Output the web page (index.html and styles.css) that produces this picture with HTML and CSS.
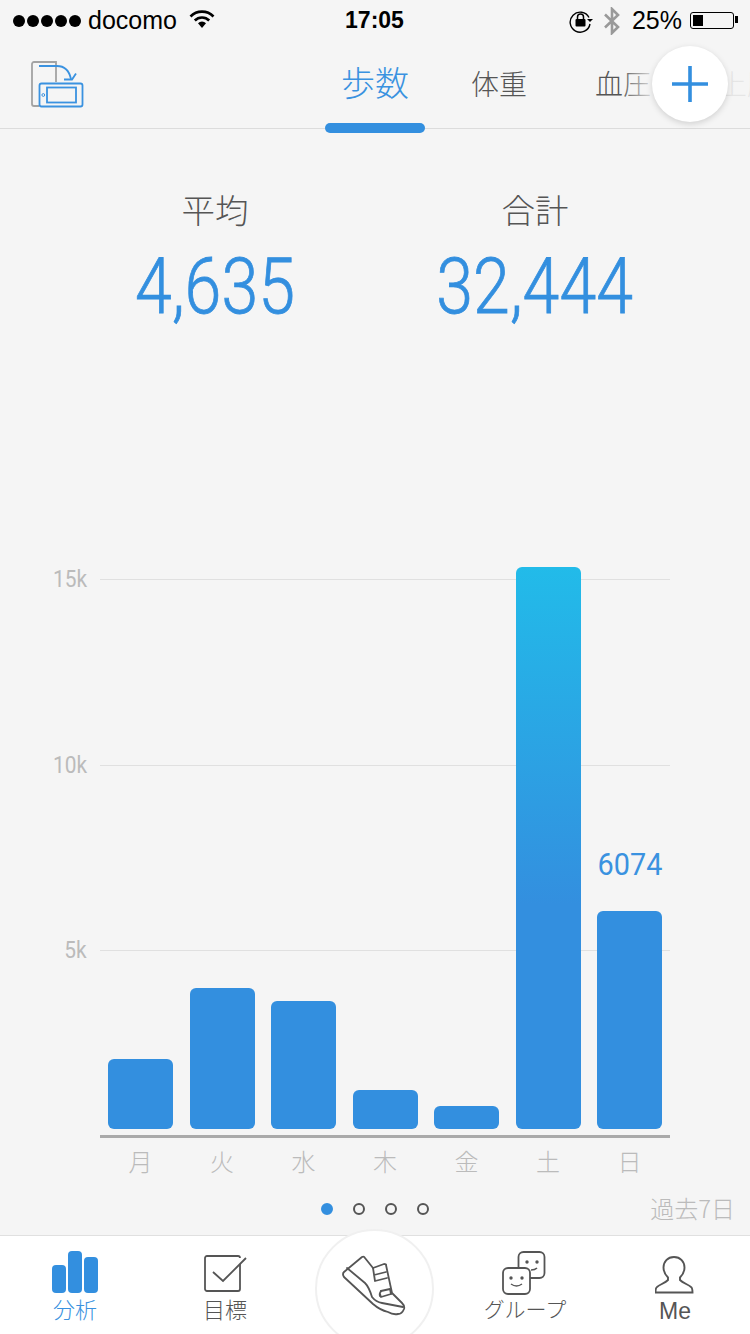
FILE: index.html
```html
<!DOCTYPE html>
<html lang="ja">
<head>
    <meta charset="UTF-8">
    <title>歩数</title>
    <link rel="stylesheet" href="styles.css">
</head>
<body>

    <div class="statusbar">
        <div class="status-left">
            <span class="signal"><i></i><i></i><i></i><i></i><i></i></span>
            <span class="carrier">docomo</span>
            <svg class="wifi" width="26" height="20" viewBox="0 0 26 20">
                <path d="M1.5 7.5a16 16 0 0 1 23 0" fill="none" stroke="#000" stroke-width="2.6"/>
                <path d="M5.8 11.5a10 10 0 0 1 14.4 0" fill="none" stroke="#000" stroke-width="2.6"/>
                <path d="M9 14.2a5.6 5.6 0 0 1 8 0L13 19z" fill="#000"/>
            </svg>
        </div>
        <div class="status-time">17:05</div>
        <div class="status-right">
            <svg width="24" height="24" viewBox="0 0 24 24">
                <path d="M20 8.5A10 10 0 1 0 21 15" fill="none" stroke="#000" stroke-width="1.4"/>
                <path d="M18 10h6l-3 3z" fill="#000"/>
                <rect x="6.5" y="10" width="10" height="7.5" rx="1" fill="#000"/>
                <path d="M8.5 10V8a3 3 0 0 1 6 0v2" fill="none" stroke="#000" stroke-width="1.5"/>
            </svg>
            <svg class="bt" width="18" height="28" viewBox="0 0 18 28">
                <path d="M2 7.5l13 12.5-6 6V2l6 6L2 20.500" fill="none" stroke="#999" stroke-width="2.6"/>
            </svg>
            <span class="battery-text">25%</span>
            <span class="battery"><span class="battery-level"></span></span>
        </div>
    </div>

    <div class="header">
        <svg class="switch-icon" width="54" height="50" viewBox="0 0 54 50">
            <path d="M26 2.500V1H4a2 2 0 0 0-2 2v40a2 2 0 0 0 2 2h5" transform="translate(0 1)" fill="none" stroke="#a3a3a3" stroke-width="1.800"/>
            <path d="M26 3v19" fill="none" stroke="#a3a3a3" stroke-width="1.800"/>
            <rect x="9.500" y="23.500" width="43" height="23" rx="2" fill="#f5f5f5" stroke="#3a92e0" stroke-width="1.800"/>
            <rect x="17" y="27.500" width="29" height="15" fill="none" stroke="#3a92e0" stroke-width="1.800"/>
            <circle cx="13.300" cy="35" r="1.400" fill="none" stroke="#3a92e0"/>
            <path d="M9 6h18c7 0 12 4 14 13" fill="none" stroke="#3a92e0" stroke-width="1.800"/>
            <path d="M34 19.500h8l4-6" fill="none" stroke="#3a92e0" stroke-width="1.800"/>
        </svg>
        <div class="tabs">
            <div class="tab tab-active">歩数</div>
            <div class="tab">体重</div>
            <div class="tab">血圧</div>
            <div class="tab">上腕</div>
        </div>
        <div class="tabs-fade"></div>
        <div class="add-button">
            <svg width="38" height="38" viewBox="0 0 38 38">
                <path d="M19 1v36M1 19h36" stroke="#338fdf" stroke-width="3.600"/>
            </svg>
        </div>
    </div>

    <div class="stats">
        <div class="stat">
            <div class="stat-label">平均</div>
            <div class="stat-value"><span>4,635</span></div>
        </div>
        <div class="stat">
            <div class="stat-label">合計</div>
            <div class="stat-value"><span>32,444</span></div>
        </div>
    </div>

    <div class="chart">
        <div class="plot">
            <div class="gridlines">
                <div class="gridline"><span>15k</span></div>
                <div class="gridline"><span>10k</span></div>
                <div class="gridline"><span>5k</span></div>
            </div>
            <div class="bars">
                <div class="bar" style="height:70px"></div>
                <div class="bar" style="height:141px"></div>
                <div class="bar" style="height:128px"></div>
                <div class="bar" style="height:39px"></div>
                <div class="bar" style="height:23px"></div>
                <div class="bar bar-max" style="height:562px"></div>
                <div class="bar" style="height:218px"><div class="bar-value"><span>6074</span></div></div>
            </div>
        </div>
        <div class="days">
            <span>月</span><span>火</span><span>水</span><span>木</span><span>金</span><span>土</span><span>日</span>
        </div>
    </div>

    <div class="pager">
        <div class="dots">
            <i class="dot dot-on"></i><i class="dot"></i><i class="dot"></i><i class="dot"></i>
        </div>
        <div class="range">過去7日</div>
    </div>

    <div class="tabbar">
        <div class="tabbar-item item-active">
            <svg width="46" height="44" viewBox="0 0 46 44">
                <rect x="0" y="14" width="14" height="28" rx="4" fill="#338fdf"/>
                <rect x="16" y="0" width="14" height="42" rx="4" fill="#338fdf"/>
                <rect x="32" y="6" width="14" height="36" rx="4" fill="#338fdf"/>
            </svg>
            <span>分析</span>
        </div>
        <div class="tabbar-item">
            <svg width="44" height="44" viewBox="0 0 44 44">
                <path d="M37 13v25a2 2 0 0 1-2 2H4a2 2 0 0 1-2-2V7a2 2 0 0 1 2-2h31a2 2 0 0 1 2 2" fill="none" stroke="#555" stroke-width="1.800"/>
                <path d="M10 21l10 9L43 7" fill="none" stroke="#555" stroke-width="1.800"/>
            </svg>
            <span>目標</span>
        </div>
        <div class="tabbar-center">
            <svg width="68" height="66" viewBox="30 28 68 66">
                <g fill="none" stroke="#555" stroke-width="1.800" stroke-linejoin="round" stroke-linecap="round">
                    <path d="M34 47L52 32q2-1 3 1l8 10 11-4q2 0 2 1l6 28 10 10q3 3 2 6-2 5-6 5-5 1-10-2-8-2-15-8L34 52q-2-3 0-5z"/>
                    <path d="M37 43l18 15q4 4 7 14 4 5 10 6l21 4"/>
                    <path d="M63 43l2 13 12-3M64 50l12-3"/>
                    <path d="M70 69l1 3 10-3M71 66q-2 3-1 5"/>
                    <path d="M71 66l9-2 1 5"/>
                </g>
            </svg>
        </div>
        <div class="tabbar-item item-group">
            <svg width="46" height="44" viewBox="0 0 46 44">
                <g fill="none" stroke="#555" stroke-width="1.800">
                    <rect x="16.500" y="1" width="26" height="26" rx="5"/>
                    <rect x="1" y="17" width="27" height="26" rx="5" fill="#fff"/>
                </g>
                <g fill="#555">
                    <circle cx="25" cy="11" r="1.700"/><circle cx="35" cy="11" r="1.700"/>
                    <circle cx="9" cy="27" r="1.700"/><circle cx="20" cy="27" r="1.700"/>
                </g>
                <g fill="none" stroke="#555" stroke-width="1.500">
                    <path d="M9 33q5.500 4 11 0"/><path d="M29 19q4 0 6-2"/>
                </g>
            </svg>
            <span>グループ</span>
        </div>
        <div class="tabbar-item item-me">
            <svg width="40" height="44" viewBox="0 0 40 44">
                <path d="M19 6c-6.500 0-10.500 5-10.500 10.500 0 4 2 7.500 4.500 10v2.500c-3 3-8 4.500-11 7q-1.500 1-1.500 5.500h37q0-4.500-1.500-5.500c-3-2.500-8-4-11-7v-2.500c2.500-2.500 4.500-6 4.500-10C29.500 11 25.500 6 19 6z" fill="none" stroke="#555" stroke-width="1.900"/>
            </svg>
            <span>Me</span>
        </div>
    </div>

</body>
</html>
```

FILE: styles.css
```css
body {
    margin: 0;
    width: 750px;
    height: 1334px;
    overflow: hidden;
    display: flex;
    flex-direction: column;
    background: #f5f5f5;
    color: #555;
    font-family: "Noto Sans CJK JP", "Liberation Sans", sans-serif;
    font-weight: 300;
}

.statusbar {
    height: 40px;
    flex: none;
    display: grid;
    grid-template-columns: 1fr auto 1fr;
    align-items: center;
    padding: 1px 14px 0 13px;
    box-sizing: border-box;
    color: #000;
    font-family: "Liberation Sans", sans-serif;
    font-weight: 400;
    font-size: 25px;
}

.status-left {
    display: flex;
    align-items: center;
}

.signal {
    display: flex;
    gap: 2px;
    margin-right: 7px;
}

.signal i {
    width: 12px;
    height: 12px;
    border-radius: 50%;
    background: #000;
}

.wifi {
    margin-left: 12px;
    margin-top: -3px;
}

.status-time {
    font-weight: 700;
    font-size: 23px;
}

.status-right {
    display: flex;
    align-items: center;
    justify-content: flex-end;
}

.bt {
    margin-left: 10px;
}

.battery-text {
    margin-left: 11px;
}

.battery {
    width: 44px;
    height: 17px;
    margin-left: 8px;
    margin-right: 2px;
    padding: 2px;
    box-sizing: border-box;
    border: 1px solid #000;
    border-radius: 3px;
    position: relative;
}

.battery::after {
    content: "";
    position: absolute;
    right: -5px;
    top: 3px;
    width: 3px;
    height: 7px;
    background: #000;
}

.battery-level {
    display: block;
    width: 10px;
    height: 100%;
    background: #000;
}

.header {
    height: 89px;
    flex: none;
    box-sizing: border-box;
    border-bottom: 1px solid #dcdcdc;
    position: relative;
}

.switch-icon {
    position: absolute;
    left: 30px;
    top: 20px;
}

.tabs {
    display: flex;
    align-items: center;
    height: 88px;
    padding-left: 325px;
    overflow: hidden;
}

.tab {
    width: 124px;
    flex: none;
    font-size: 28px;
    text-align: center;
    color: #555;
    margin-top: -3px;
}

.tab-active {
    width: 100px;
    font-size: 34px;
    color: #3a92e0;
    margin-right: 12px;
    margin-top: -5px;
}

.tabs::before {
    content: "";
    position: absolute;
    left: 325px;
    top: 83px;
    width: 100px;
    height: 10px;
    border-radius: 5px;
    background: #338fdf;
}

.tabs-fade {
    position: absolute;
    left: 620px;
    right: 0;
    top: 0;
    height: 80px;
    background: linear-gradient(to right, rgba(245, 245, 245, 0), rgba(245, 245, 245, 0.9) 35px);
}

.add-button {
    position: absolute;
    left: 652px;
    top: 6px;
    width: 76px;
    height: 76px;
    border-radius: 50%;
    background: #fff;
    box-shadow: 0 2px 6px rgba(0, 0, 0, 0.15);
    display: flex;
    align-items: center;
    justify-content: center;
}

.stats {
    height: 224px;
    flex: none;
    display: grid;
    grid-template-columns: 320px 320px;
    justify-content: center;
    padding-top: 58px;
    box-sizing: border-box;
}

.stat {
    text-align: center;
}

.stat-label {
    font-size: 33.500px;
    line-height: 44px;
}

.stat-value {
    height: 88px;
    margin-top: 12px;
    line-height: 88px;
    font-family: Roboto, sans-serif;
    font-weight: 300;
    font-size: 78px;
    color: #338fdf;
    -webkit-text-stroke: 0.8px #338fdf;
}

.stat-value span {
    display: inline-block;
    transform: scaleX(0.85);
}

.chart {
    height: 624px;
    flex: none;
    margin-top: 214px;
    padding-left: 100px;
    width: 570px;
}

.plot {
    height: 571px;
    box-sizing: border-box;
    border-bottom: 3px solid #aaa;
    position: relative;
}

.gridlines {
    position: absolute;
    top: 12px;
    left: 0;
    right: 0;
}

.gridline {
    height: 185.500px;
    box-sizing: border-box;
    border-top: 1px solid #e0e0e0;
    position: relative;
}

.gridline span {
    position: absolute;
    right: 583px;
    top: -15px;
    font-family: Roboto, sans-serif;
    font-weight: 400;
    font-size: 24px;
    line-height: 28px;
    color: #bbb;
    transform: scaleX(0.87);
    transform-origin: right center;
}

.bars {
    position: relative;
    height: 100%;
    box-sizing: border-box;
    padding: 0 8px 6px;
    display: grid;
    grid-template-columns: repeat(7, 1fr);
    column-gap: 16.500px;
    align-items: end;
}

.bar {
    background: #338fdf;
    border-radius: 6px;
    position: relative;
}

.bar-max {
    background: linear-gradient(to bottom, #22bbe9, #338fdf 60%);
}

.bar-value {
    position: absolute;
    left: -10px;
    right: -10px;
    bottom: calc(100% + 29px);
    text-align: center;
    font-family: Roboto, sans-serif;
    font-weight: 400;
    font-size: 32px;
    line-height: 36px;
    color: #3a92e0;
}

.bar-value span {
    display: inline-block;
    transform: scaleX(0.9);
}

.days {
    padding: 5px 8px 0;
    display: grid;
    grid-template-columns: repeat(7, 1fr);
    column-gap: 16.500px;
    text-align: center;
    font-size: 24px;
    line-height: 36px;
    color: #bbb;
}

.pager {
    flex: none;
    height: 44px;
    position: relative;
    display: flex;
    justify-content: center;
    align-items: center;
}

.dots {
    display: flex;
    gap: 20px;
    margin-left: -1px;
    margin-bottom: 8px;
}

.dot {
    width: 12px;
    height: 12px;
    box-sizing: border-box;
    border: 2px solid #555;
    border-radius: 50%;
}

.dot-on {
    background: #338fdf;
    border-color: #338fdf;
}

.range {
    position: absolute;
    right: 15px;
    top: 1px;
    font-size: 24px;
    line-height: 32px;
    color: #bbb;
}

.tabbar {
    flex: none;
    height: 99px;
    box-sizing: border-box;
    border-top: 1px solid #e0e0e0;
    background: #fff;
    display: grid;
    grid-template-columns: repeat(5, 150px);
}

.tabbar-item {
    display: flex;
    flex-direction: column;
    align-items: center;
    padding-top: 15px;
    font-size: 22px;
    line-height: 26px;
    color: #555;
}

.tabbar-item svg {
    display: block;
}

.item-active {
    color: #3a92e0;
}

.item-group span {
    font-size: 21px;
}

.item-me span {
    margin-top: 3px;
    font-family: "Liberation Sans", sans-serif;
    font-size: 23px;
}

.tabbar-center {
    width: 119px;
    height: 119px;
    margin: -7px 0 0 14.500px;
    box-sizing: border-box;
    border: 2px solid #f0f0f0;
    border-radius: 50%;
    background: #fff;
    display: flex;
    justify-content: center;
    padding-top: 22px;
}
```
